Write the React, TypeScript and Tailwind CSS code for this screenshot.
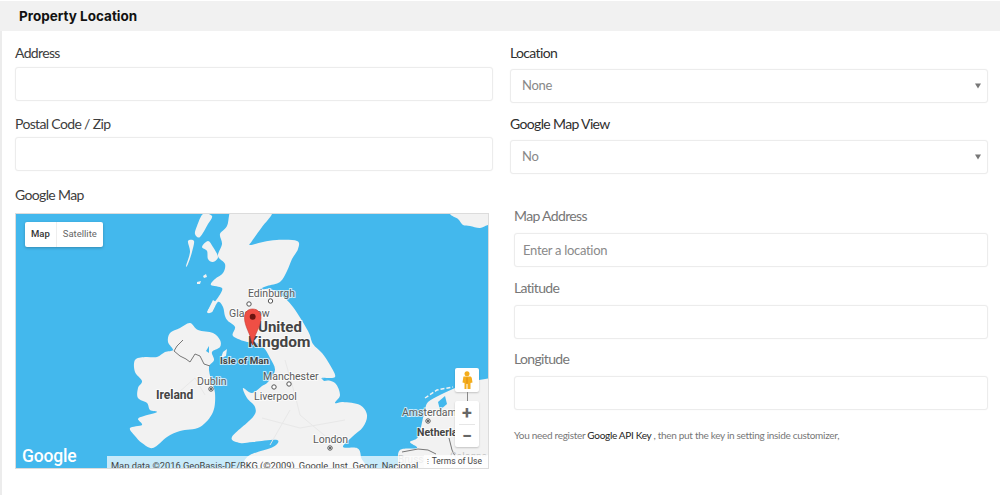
import { useState } from "react";

const inputClass =
  "block w-full h-[34px] rounded-[3px] border border-[#ececec] bg-white px-[8px] text-[13px] tracking-[-0.3px] text-[#888] placeholder:text-[#8a8a8a] shadow-[0_0_2px_rgba(0,0,0,0.04)] outline-none";
const labelClass = "block h-5 leading-5 text-[14px] tracking-[-0.65px]";

function Field({ label, className, muted }: { label: string; className?: string; muted?: boolean }) {
  return (
    <div className={className}>
      <label className={labelClass + (muted ? " text-[#777]" : " text-[#3d3d3d]")}>{label}</label>
      <input className={inputClass + " mt-1"} />
    </div>
  );
}

function SelectField({ label, value, className }: { label: string; value: string; className?: string }) {
  const [selected, setSelected] = useState(value);
  return (
    <div className={className}>
      <label className={labelClass + " text-[#2f2f2f]"}>{label}</label>
      <div className="relative mt-[6px]">
        <select
          value={selected}
          onChange={(e) => setSelected(e.target.value)}
          className="block w-full h-[34px] appearance-none rounded-[3px] border border-[#ececec] bg-white pl-[11px] text-[13px] tracking-[-0.3px] text-[#888] shadow-[0_0_2px_rgba(0,0,0,0.04)] outline-none"
        >
          <option>{value}</option>
        </select>
        <svg className="absolute right-[7px] top-[14px] w-[6px] h-[6px]" viewBox="0 0 6 6">
          <path d="M0 0.5h6L3 5.5z" fill="#777" />
        </svg>
      </div>
    </div>
  );
}

// catmull-rom through the coast points so the land doesn't look polygonal
function coast(pts: number[][]) {
  const n = pts.length;
  let d = `M${pts[0][0]} ${pts[0][1]}`;
  for (let i = 0; i < n; i++) {
    const p0 = pts[(i - 1 + n) % n];
    const p1 = pts[i];
    const p2 = pts[(i + 1) % n];
    const p3 = pts[(i + 2) % n];
    const c1x = p1[0] + (p2[0] - p0[0]) / 6;
    const c1y = p1[1] + (p2[1] - p0[1]) / 6;
    const c2x = p2[0] - (p3[0] - p1[0]) / 6;
    const c2y = p2[1] - (p3[1] - p1[1]) / 6;
    d += `C${c1x} ${c1y} ${c2x} ${c2y} ${p2[0]} ${p2[1]}`;
  }
  return d + "Z";
}

const britain = [
  [235, 205], [272, 205], [272, 214], [262, 227], [252, 241], [250, 245], [263, 242], [277, 240], [297, 241], [298, 249],
  [292, 259], [287, 271], [280, 282], [267, 286], [258, 290], [270, 289], [280, 294], [293, 307], [308, 331], [313, 344],
  [322, 353], [330, 365], [335, 377], [322, 378], [335, 383], [340, 395], [335, 403], [343, 402], [360, 405], [367, 415],
  [363, 427], [352, 437], [343, 447], [357, 448], [361, 457], [361, 480], [243, 480], [243, 465], [250, 455], [273, 447],
  [277, 440], [253, 442], [240, 443], [232, 437], [253, 417], [255, 407], [247, 398], [243, 388], [252, 393], [262, 386],
  [268, 382], [275, 370], [270, 358], [263, 347], [252, 341], [247, 342], [233, 336], [235, 327], [228, 321], [225, 316],
  [223, 307], [218, 302], [212, 312], [207, 312], [213, 304], [219, 296], [222, 288], [211, 285], [215, 279], [223, 273],
  [225, 264], [218, 256], [222, 244], [220, 234], [227, 226],
];
const lewis = [[197, 226], [203, 214], [212, 216], [208, 224], [200, 237], [195, 234]];
const uist = [[188, 241], [194, 241], [192, 252], [188, 264], [186, 266], [190, 252]];
const skye = [[202, 247], [208, 241], [213, 247], [218, 257], [213, 262], [208, 259], [207, 251]];
const ireland = [
  [170, 333], [180, 328], [190, 323], [198, 330], [213, 333], [220, 340], [220, 347], [212, 352], [214, 360], [209, 367],
  [211, 380], [215, 393], [213, 412], [200, 427], [180, 431], [167, 437], [153, 448], [142, 443], [135, 436], [130, 428],
  [142, 425], [138, 419], [144, 416], [157, 412], [150, 410], [147, 403], [138, 398], [138, 388], [142, 381], [135, 372],
  [135, 360], [145, 357], [157, 357], [165, 352], [173, 350], [168, 342],
];
const continent = [
  [500, 376], [490, 378], [470, 382], [455, 388], [440, 395], [428, 402], [425, 410], [423, 418], [418, 437], [410, 442],
  [417, 448], [400, 450], [398, 463], [398, 480], [500, 480],
];
const norway = [[450, 205], [450, 214], [458, 219], [463, 225], [470, 226], [480, 228], [488, 225], [500, 222], [500, 205]];

function MapLabel({ x, y, size, bold, children }: { x: number; y: number; size: number; bold?: boolean; children: string }) {
  return (
    <text
      x={x}
      y={y}
      fontSize={size}
      fontWeight={bold ? 700 : 400}
      fontFamily="Roboto, sans-serif"
      fill={bold ? "#444" : "#5c5c5c"}
      stroke="#fff"
      strokeOpacity={0.7}
      strokeWidth={2}
      paintOrder="stroke"
    >
      {children}
    </text>
  );
}

function CityDot({ x, y, filled }: { x: number; y: number; filled?: boolean }) {
  return (
    <g>
      <circle cx={x} cy={y} r={2.2} fill="#fff" stroke="#555" strokeWidth={1} />
      {filled && <circle cx={x} cy={y} r={1} fill="#333" />}
    </g>
  );
}

function UkMap() {
  return (
    <svg className="block w-full h-full" viewBox="16 214 472 254">
      <rect x="16" y="214" width="472" height="254" fill="#43b8ed" />
      <g fill="#f2f2f2">
        <path d={coast(britain)} />
        <path d={coast(lewis)} />
        <path d={coast(uist)} />
        <path d={coast(skye)} />
        <path d={coast(ireland)} />
        <path d={coast(continent)} />
        <path d={coast(norway)} />
        <path d="M203 276l3-2 1 3-3 1zM197 282l4-1-1 3-3 0zM208 310l5-10 3 2-4 10z" />
        <path d="M223 352L227 349L226 356L221 358Z" />
      </g>
      {/* border with Northern Ireland */}
      <path
        fill="none"
        stroke="#777"
        strokeWidth={1}
        d="M183 340L177 346L174 351L180 356L186 359L190 362L195 354L200 356L204 364L210 366"
      />
      {/* frisian islands, ijsselmeer, dutch border */}
      <path fill="none" stroke="#f2f2f2" strokeWidth={1.5} strokeDasharray="4 2" d="M425 398L437 390L453 387" />
      <path fill="#43b8ed" d="M438 402L445 396L447 404L440 410Z" />
      <path fill="none" stroke="#777" strokeWidth={1} d="M402 452L418 449L428 450L436 454M449 438L452 450L456 458" />
      {/* roads and rivers */}
      <path
        fill="none"
        stroke="#e8e8e8"
        strokeWidth={1}
        d="M285 360L295 395L300 415L330 440M170 400L195 378L205 395M262 418L300 428L345 420M290 410L270 445"
      />
      <path fill="#43b8ed" d="M206 351L209 346L209 353Z" />
      <path fill="#43b8ed" d="M321 378L331 380L324 381Z" />

      <MapLabel x={248} y={297} size={10.5}>Edinburgh</MapLabel>
      <CityDot x={270.5} y={301} />
      <CityDot x={249} y={304} />
      <MapLabel x={229} y={317} size={10.5}>Glasgow</MapLabel>
      <MapLabel x={258} y={332} size={15} bold>United</MapLabel>
      <MapLabel x={248} y={347} size={15.5} bold>Kingdom</MapLabel>
      <MapLabel x={220} y={364} size={9.8} bold>Isle of Man</MapLabel>
      <MapLabel x={197} y={385} size={10.5}>Dublin</MapLabel>
      <CityDot x={211} y={389} filled />
      <MapLabel x={156} y={399} size={12} bold>Ireland</MapLabel>
      <MapLabel x={263} y={380} size={10.5}>Manchester</MapLabel>
      <CityDot x={289} y={384} />
      <CityDot x={274} y={387} />
      <MapLabel x={254} y={400} size={10.5}>Liverpool</MapLabel>
      <MapLabel x={313} y={443} size={10.5}>London</MapLabel>
      <CityDot x={330} y={448} filled />
      <MapLabel x={402} y={416} size={10.5}>Amsterdam</MapLabel>
      <CityDot x={428} y={421} filled />
      <MapLabel x={417} y={436} size={10.5} bold>Netherla</MapLabel>
      <text x={398} y={463} fontSize={10} fontFamily="Roboto, sans-serif" fill="#c4c4c4">Brusse</text>
      <text x={450} y={460} fontSize={10} fontFamily="Roboto, sans-serif" fill="#c4c4c4">Cologne</text>

      {/* pin */}
      <path
        d="M252.500 345C250.500 333 244.500 327 244.500 317.500C244.500 312 248 309 252.500 309C257 309 261 312 261 317.500C261 327 254.500 333 252.500 345Z"
        fill="#ef4f45"
        stroke="#c43a32"
        strokeWidth={0.6}
      />
      <circle cx={252.700} cy={316.700} r={3} fill="#6b1510" />
    </svg>
  );
}

function Pegman() {
  return (
    <svg className="w-[12px] h-[18px]" viewBox="0 0 12 18">
      <circle cx="6" cy="2.800" r="2.500" fill="#f4ad1c" />
      <path d="M3 5.500h6c1 0 1.600 .6 1.800 1.500l.7 4.500-2 .5V18H6.500v-5h-1v5H3.500v-6l-2-.5.7-4.500C2.400 6.100 2 5.500 3 5.500z" fill="#f4ad1c" />
      <path d="M6 6.500v6" stroke="#e08a10" strokeWidth={1} />
    </svg>
  );
}

function GoogleMapBox() {
  return (
    <div className="relative mt-[8px] h-[256px] w-[474px] overflow-hidden border border-[#dcdcdc] font-[Roboto,sans-serif]">
      <UkMap />
      {/* map type switch */}
      <div className="absolute left-[9px] top-[8px] flex h-[25px] items-center rounded-[2px] bg-white text-[9.5px] shadow-[0_1px_3px_rgba(0,0,0,0.25)]">
        <span className="flex h-full items-center border-r border-[#eee] px-[6px] font-medium text-[#333]">Map</span>
        <span className="px-[6px] text-[#666]">Satellite</span>
      </div>
      {/* logo */}
      <span className="absolute bottom-0 left-[6px] text-[17.5px] font-medium leading-6 tracking-[-0.2px] text-white">
        Google
      </span>
      {/* attribution */}
      <div className="absolute bottom-0 left-[91px] right-0 h-[12px] overflow-hidden whitespace-nowrap bg-white/70 pl-[4px] text-[9.3px] leading-[20px] text-[#444]">
        Map data ©2016 GeoBasis-DE/BKG (©2009), Google, Inst. Geogr. Nacional
      </div>
      <div className="absolute bottom-0 right-0 h-[13px] bg-white/80 pl-[3px] pr-[6px] text-[8.5px] leading-[13px] text-[#444]">
        <span className="mr-[3px] text-[7px]">⁝</span>Terms of Use
      </div>
      {/* street view + zoom */}
      <div className="absolute right-[9px] top-[154px] flex w-[24px] flex-col items-center">
        <div className="flex h-[24px] w-[24px] items-center justify-center rounded-[2px] bg-white shadow-[0_1px_2px_rgba(0,0,0,0.2)]">
          <Pegman />
        </div>
        <span className="h-[9px] w-px bg-[#888]" />
        <div className="flex h-[46px] w-[24px] flex-col items-center rounded-[2px] bg-white text-[#666] shadow-[0_1px_2px_rgba(0,0,0,0.2)]">
          <span className="flex h-[23px] items-center text-[18px] font-bold leading-none">+</span>
          <span className="h-px w-[16px] bg-[#e6e6e6]" />
          <span className="flex h-[22px] items-center text-[18px] font-bold leading-none">−</span>
        </div>
      </div>
    </div>
  );
}

export default function App() {
  return (
    <div className="h-[495px] w-[1000px] overflow-hidden bg-white pt-px font-[Lato,sans-serif]">
      <div className="flex h-[30px] items-center bg-[#f1f1f1] pl-[19px] pt-px">
        <h2 className="font-[Inter,sans-serif] text-[13.5px] font-bold text-[#111]">Property Location</h2>
      </div>

      <div className="grid h-[464px] grid-cols-[478px_478px] gap-x-[17px] border-l-2 border-[#ececec] pl-[13px] pt-[12px]">
        <div>
          <Field label="Address" />
          <Field label="Postal Code / Zip" className="mt-[13px] [&>input]:mt-[3px]" />
          <label className={labelClass + " mt-[14px] text-[#3d3d3d]"}>Google Map</label>
          <GoogleMapBox />
        </div>

        <div>
          <SelectField label="Location" value="None" />
          <SelectField label="Google Map View" value="No" className="mt-[11px]" />

          <div className="mt-[32px] pl-[4px]">
            <label className={labelClass + " text-[#777]"}>Map Address</label>
            <input placeholder="Enter a location" className={inputClass + " mt-[7px]"} />
            <Field label="Latitude" muted className="mt-[11px] [&>input]:mt-[7px]" />
            <Field label="Longitude" muted className="mt-[10px] [&>input]:mt-[7px]" />
            <p className="mt-[17px] text-[10px] leading-4 tracking-[-0.3px] text-[#777]">
              You need register <a className="text-[#222]">Google API Key</a> , then put the key in setting inside customizer,
            </p>
          </div>
        </div>
      </div>
    </div>
  );
}
